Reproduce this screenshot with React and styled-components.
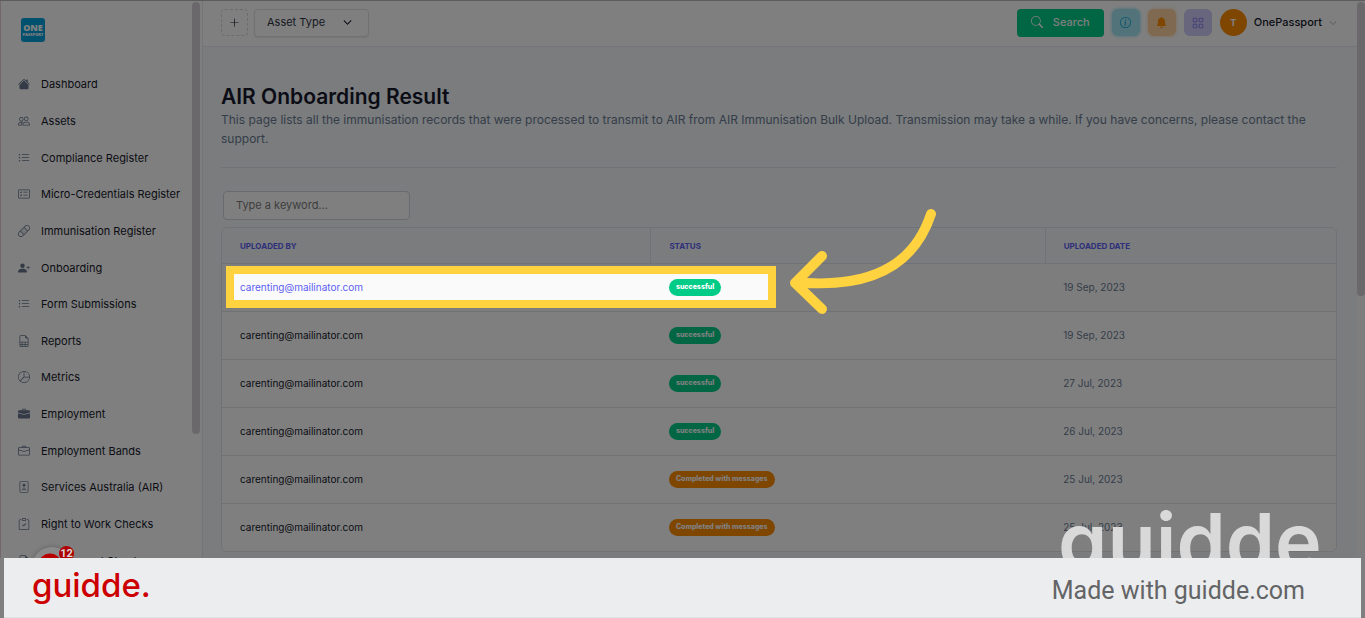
import React from 'react';
import styled, { createGlobalStyle } from 'styled-components';
import {
  BsHouseFill,
  BsPeople,
  BsListUl,
  BsCardChecklist,
  BsBandaid,
  BsPersonPlusFill,
  BsFileEarmarkSpreadsheet,
  BsPieChart,
  BsBriefcaseFill,
  BsBriefcase,
  BsClipboardCheck,
  BsFileEarmarkText,
  BsPlusLg,
  BsChevronDown,
  BsSearch,
  BsInfoCircle,
  BsBellFill,
  BsGrid,
} from 'react-icons/bs';

const GlobalStyle = createGlobalStyle`
  * {
    box-sizing: border-box;
  }
  body {
    margin: 0;
    font-family: Inter, 'Liberation Sans', sans-serif;
    color: #16192c;
    background: #7f7f7f;
  }
  button, input, select {
    font-family: inherit;
  }
`;

const Page = styled.div`
  display: flex;
  flex-direction: column;
  height: 100vh;
`;

const Stage = styled.div`
  position: relative;
  display: flex;
  flex: 1;
  min-height: 0;
  overflow: hidden;
  border-top: 1px solid #5c5c5c;
  background: #f5f9fc;
`;

const Sidebar = styled.aside`
  display: flex;
  flex: 0 0 203px;
  justify-content: space-between;
  background: #ffffff;
  border-left: 1px solid #e8ccd2;
  border-right: 1px solid #e7eaf0;
`;

const SidebarBody = styled.div`
  padding: 17px 0 0 17px;
`;

const Logo = styled.a`
  display: flex;
  flex-direction: column;
  align-items: center;
  justify-content: center;
  width: 24px;
  height: 24px;
  margin-left: 3px;
  border-radius: 3px;
  background: #00a0dc;
  color: #ffffff;
  font-family: 'Open Sans', sans-serif;
  font-size: 9px;
  font-weight: 800;
  line-height: 9px;
  text-decoration: none;
  small {
    font-size: 4px;
    line-height: 5px;
  }
`;

const NavList = styled.ul`
  display: grid;
  grid-auto-rows: 1fr;
  height: 513px;
  margin: 24px 0 0;
  padding: 0;
  list-style: none;
`;

const NavLink = styled.a`
  display: flex;
  align-items: center;
  gap: 11px;
  height: 100%;
  color: #16192c;
  font-size: 11px;
  line-height: 16px;
  text-decoration: none;
  white-space: nowrap;
  svg {
    width: 12px;
    height: 12px;
    color: #68778d;
  }
`;

const ScrollTrack = styled.div`
  flex: 0 0 ${({ $width }) => $width}px;
  padding-top: 1px;
  background: ${({ $bg }) => $bg || 'transparent'};
`;

const ScrollThumb = styled.div`
  width: 8px;
  height: ${({ $height }) => $height};
  border-radius: 4px;
  background: #d6d0d6;
`;

const Main = styled.div`
  flex: 1;
  min-width: 0;
`;

const TopBar = styled.header`
  display: flex;
  align-items: center;
  justify-content: space-between;
  height: 46px;
  padding: 0 20px 2px 18px;
  background: #ffffff;
  border-bottom: 1px solid #e7eaf0;
`;

const Group = styled.div`
  display: flex;
  align-items: center;
  gap: ${({ $gap }) => $gap}px;
`;

const AddButton = styled.button`
  display: flex;
  align-items: center;
  justify-content: center;
  width: 27px;
  height: 27px;
  padding: 0;
  border: 1px dashed #d5d9e0;
  border-radius: 4px;
  background: #ffffff;
  color: #16192c;
`;

const SelectBox = styled.label`
  display: flex;
  align-items: center;
  width: 115px;
  height: 28px;
  padding: 0 16px 0 12px;
  border: 1px solid #dfe3ea;
  border-radius: 4px;
  background: #ffffff;
  box-shadow: 0 1px 2px rgba(50, 50, 71, 0.1);
  select {
    flex: 1;
    min-width: 0;
    padding: 0 0 2px;
    border: 0;
    appearance: none;
    background: transparent;
    color: #2d3344;
    font-size: 11px;
  }
  svg {
    stroke: currentColor;
    stroke-width: 1;
  }
`;

const SearchButton = styled.button`
  display: flex;
  align-items: center;
  justify-content: center;
  gap: 10px;
  width: 87px;
  height: 28px;
  padding: 0 0 2px;
  border: 0;
  border-radius: 4px;
  background: #00cc88;
  color: #ffffff;
  font-size: 11px;
  font-weight: 500;
`;

const IconButton = styled.button`
  display: flex;
  align-items: center;
  justify-content: center;
  width: 28px;
  height: 27px;
  padding: 0;
  border: 0;
  border-radius: 6px;
  background: ${({ $bg }) => $bg};
  color: ${({ $color }) => $color};
  box-shadow: ${({ $halo }) => ($halo ? `0 0 3px 1px ${$halo}` : 'none')};
`;

const UserButton = styled.button`
  display: flex;
  align-items: center;
  gap: 7px;
  padding: 0;
  border: 0;
  background: transparent;
  color: #16192c;
  font-size: 11px;
  font-weight: 500;
  > svg {
    color: #8b93a3;
  }
`;

const UserName = styled.span`
  padding-bottom: 2px;
`;

const Avatar = styled.span`
  display: flex;
  align-items: center;
  justify-content: center;
  width: 27px;
  height: 27px;
  border-radius: 50%;
  background: #ff8c00;
  color: #ffffff;
  font-size: 9px;
  font-weight: 700;
`;

const Content = styled.main`
  padding: 37px 20px 0 18px;
`;

const Title = styled.h1`
  margin: 0;
  font-size: 21px;
  font-weight: 600;
  line-height: 26px;
`;

const Description = styled.p`
  margin: 0;
  padding-bottom: 19px;
  border-bottom: 1px solid #e0e4ea;
  color: #6b7b93;
  font-size: 12px;
  line-height: 19px;
`;

const Keyword = styled.input`
  display: block;
  width: 187px;
  height: 29px;
  margin: 23px 2px 7px;
  padding: 0 12px 2px;
  border: 1px solid #cfd4dc;
  border-radius: 4px;
  background: #ffffff;
  font-size: 11px;
  &::placeholder {
    color: #7d7d7d;
    opacity: 1;
  }
`;

const TableCard = styled.div`
  border: 1px solid #e0e4ea;
  border-radius: 6px;
  overflow: hidden;
`;

const Table = styled.table`
  width: 100%;
  table-layout: fixed;
  border-collapse: collapse;
  th {
    height: 35px;
    padding: 2px 18px 0;
    color: #5c60f5;
    font-size: 8px;
    font-weight: 700;
    text-align: left;
    text-transform: uppercase;
  }
  th + th {
    border-left: 1px solid #e0e4ea;
  }
  td {
    height: 48px;
    padding: 0 18px;
    border-top: 1px solid #e0e4ea;
    background: #ffffff;
    color: #6b7b93;
    font-size: 10px;
  }
  tbody tr:first-child td {
    background: #fafafa;
  }
`;

const Email = styled.a`
  color: ${({ $active }) => ($active ? '#5c60f5' : '#16192c')};
  text-decoration: none;
`;

const Badge = styled.span`
  display: inline-block;
  padding: 0 7px 1px;
  border-radius: 9px;
  background: ${({ $done }) => ($done ? '#00cc88' : '#ff8c00')};
  color: #ffffff;
  font-size: 7px;
  font-weight: 800;
  line-height: 16px;
  vertical-align: middle;
`;

// everything outside the highlighted cell is dimmed by its own shadow
const Highlight = styled.div`
  position: absolute;
  top: 265px;
  left: 226px;
  width: 550px;
  height: 42px;
  border: 8px solid #ffd23f;
  box-shadow: 0 0 0 2000px rgba(0, 0, 0, 0.5);
`;

const Arrow = styled.svg`
  position: absolute;
  top: 199px;
  left: 780px;
`;

const ChatBubble = styled.svg`
  position: absolute;
  bottom: -29px;
  left: 32px;
  border-radius: 50%;
  background: #8a8a8a;
  box-shadow: 0 0 5px rgba(0, 0, 0, 0.25);
`;

const Count = styled.span`
  position: absolute;
  bottom: -3px;
  left: 59px;
  width: 15px;
  height: 15px;
  border-radius: 50%;
  background: #b00000;
  color: #d8d8d8;
  font-family: Roboto, sans-serif;
  font-size: 11px;
  font-weight: 700;
  line-height: 15px;
  text-align: center;
`;

const Watermark = styled.div`
  position: absolute;
  right: 18px;
  bottom: -23px;
  color: #d9d9d9;
  font-size: 79px;
  font-weight: 600;
  line-height: 80px;
`;

const Footer = styled.footer`
  display: flex;
  align-items: flex-start;
  justify-content: space-between;
  height: 60px;
  margin: 0 4px;
  padding: 0 56px 0 28px;
  border-bottom: 1px solid #e0e3e5;
  background: #ecedef;
`;

const Brand = styled.span`
  color: #cc0000;
  font-size: 33px;
  font-weight: 500;
  line-height: 54px;
`;

const Credit = styled.span`
  color: #636466;
  font-family: Roboto, sans-serif;
  font-size: 25px;
  line-height: 66px;
`;

const RecordIcon = () => (
  <svg viewBox="0 0 16 16" fill="none" stroke="currentColor">
    <rect x="2.5" y="0.5" width="11" height="15" rx="1.5" />
    <circle cx="8" cy="5.5" r="1.5" fill="currentColor" />
    <path d="M5 11.5h6M6 9.5h4" />
  </svg>
);

const menu = [
  { label: 'Dashboard', Icon: BsHouseFill },
  { label: 'Assets', Icon: BsPeople },
  { label: 'Compliance Register', Icon: BsListUl },
  { label: 'Micro-Credentials Register', Icon: BsCardChecklist },
  { label: 'Immunisation Register', Icon: BsBandaid },
  { label: 'Onboarding', Icon: BsPersonPlusFill },
  { label: 'Form Submissions', Icon: BsListUl },
  { label: 'Reports', Icon: BsFileEarmarkSpreadsheet },
  { label: 'Metrics', Icon: BsPieChart },
  { label: 'Employment', Icon: BsBriefcaseFill },
  { label: 'Employment Bands', Icon: BsBriefcase },
  { label: 'Services Australia (AIR)', Icon: RecordIcon },
  { label: 'Right to Work Checks', Icon: BsClipboardCheck },
  { label: 'Background Checks', Icon: BsFileEarmarkText },
];

const rows = [
  { email: 'carenting@mailinator.com', done: true, date: '19 Sep, 2023' },
  { email: 'carenting@mailinator.com', done: true, date: '19 Sep, 2023' },
  { email: 'carenting@mailinator.com', done: true, date: '27 Jul, 2023' },
  { email: 'carenting@mailinator.com', done: true, date: '26 Jul, 2023' },
  { email: 'carenting@mailinator.com', done: false, date: '25 Jul, 2023' },
  { email: 'carenting@mailinator.com', done: false, date: '25 Jul, 2023' },
];

const Navigation = () => (
  <Sidebar>
    <SidebarBody>
      <Logo href="#">
        ONE
        <small>PASSPORT</small>
      </Logo>
      <nav>
        <NavList>
          {menu.map(({ label, Icon }) => (
            <li key={label}>
              <NavLink href="#">
                <Icon />
                {label}
              </NavLink>
            </li>
          ))}
        </NavList>
      </nav>
    </SidebarBody>
    <ScrollTrack $width={10}>
      <ScrollThumb $height="432px" />
    </ScrollTrack>
  </Sidebar>
);

const Header = () => (
  <TopBar>
    <Group $gap={6}>
      <AddButton aria-label="Add">
        <BsPlusLg size={11} />
      </AddButton>
      <SelectBox>
        <select aria-label="Asset Type">
          <option>Asset Type</option>
        </select>
        <BsChevronDown size={9} />
      </SelectBox>
    </Group>
    <Group $gap={8}>
      <SearchButton>
        <BsSearch size={12} />
        Search
      </SearchButton>
      <IconButton $bg="#a6e6f5" $color="#00a5d8" $halo="#b8ecf8" aria-label="Info">
        <BsInfoCircle size={11} />
      </IconButton>
      <IconButton $bg="#ffd3a3" $color="#ff8c00" $halo="#ffe6cc" aria-label="Notifications">
        <BsBellFill size={11} />
      </IconButton>
      <IconButton $bg="#cfcdfa" $color="#7a6ff0" aria-label="Apps">
        <BsGrid size={12} />
      </IconButton>
      <UserButton>
        <Avatar>T</Avatar>
        <UserName>OnePassport</UserName>
        <BsChevronDown size={8} />
      </UserButton>
    </Group>
  </TopBar>
);

const Results = () => (
  <TableCard>
    <Table>
      <colgroup>
        <col style={{ width: '38.5%' }} />
        <col style={{ width: '35.4%' }} />
        <col />
      </colgroup>
      <thead>
        <tr>
          <th>Uploaded By</th>
          <th>Status</th>
          <th>Uploaded Date</th>
        </tr>
      </thead>
      <tbody>
        {rows.map((row, i) => (
          <tr key={i}>
            <td>
              <Email href="#" $active={i === 0}>
                {row.email}
              </Email>
            </td>
            <td>
              <Badge $done={row.done}>
                {row.done ? 'successful' : 'Completed with messages'}
              </Badge>
            </td>
            <td>{row.date}</td>
          </tr>
        ))}
      </tbody>
    </Table>
  </TableCard>
);

const App = () => {
  return (
    <>
      <GlobalStyle />
      <Page>
        <Stage>
          <Navigation />
          <Main>
            <Header />
            <Content>
              <Title>AIR Onboarding Result</Title>
              <Description>
                This page lists all the immunisation records that were processed
                to transmit to AIR from AIR Immunisation Bulk Upload.
                Transmission may take a while. If you have concerns, please
                contact the support.
              </Description>
              <Keyword placeholder="Type a keyword..." aria-label="Keyword" />
              <Results />
            </Content>
          </Main>
          <ScrollTrack $width={8} $bg="#fcfcfc">
            <ScrollThumb $height="294px" />
          </ScrollTrack>
          <Highlight />
          <Arrow width="170" height="120" viewBox="0 0 170 120" fill="none">
            <path
              d="M151 14C136 59 100 87 27 83M42 56L15 83L42 109"
              stroke="#ffd23f"
              strokeWidth="10"
              strokeLinecap="round"
              strokeLinejoin="round"
            />
          </Arrow>
          <ChatBubble width="40" height="40" viewBox="0 0 40 40">
            <circle cx="18" cy="18" r="9" fill="none" stroke="#b80000" strokeWidth="5" />
          </ChatBubble>
          <Count>12</Count>
          <Watermark>guidde.</Watermark>
        </Stage>
        <Footer>
          <Brand>guidde.</Brand>
          <Credit>Made with guidde.com</Credit>
        </Footer>
      </Page>
    </>
  );
};

export default App;
